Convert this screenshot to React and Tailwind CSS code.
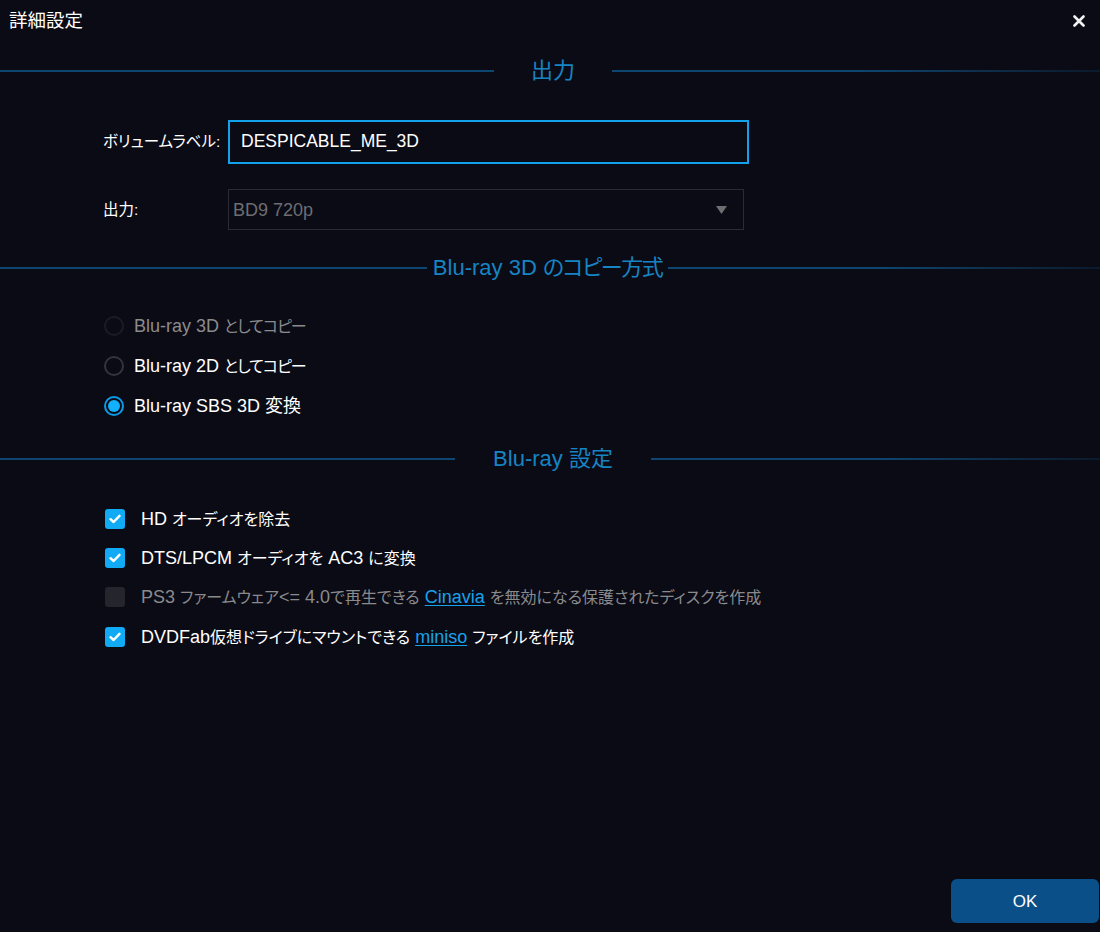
import React from "react";

const FONT = "font-['Liberation_Sans','Noto_Sans_CJK_JP',sans-serif] [font-feature-settings:'palt']";

function J({ children, className = "" }) {
  return <span className={`text-[16px] ${className}`}>{children}</span>;
}

function Header({ left, gap, children }) {
  return (
    <div className="flex items-center h-[24px]">
      <div className="h-[2px] bg-[#0d4670]" style={{ width: left }} />
      <div className="flex justify-center text-[22px] leading-none text-[#1784c4] whitespace-nowrap" style={{ width: gap }}>
        {children}
      </div>
      <div className="h-[2px] flex-1 bg-gradient-to-r from-[#0d4670] via-[#0d4670] to-[#0b1a2c]" />
    </div>
  );
}

function Radio({ state, children }) {
  return (
    <div className="flex items-center h-[40px] pl-[104px] gap-[10px]">
      {state === "on" ? (
        <div className="w-[20px] h-[20px] rounded-full border-2 border-[#0b9be6] flex items-center justify-center">
          <div className="w-[12px] h-[12px] rounded-full bg-[#12b0fd]" />
        </div>
      ) : (
        <div className={`w-[20px] h-[20px] rounded-full border-2 ${state === "disabled" ? "border-[#1c1c25]" : "border-[#34343d]"}`} />
      )}
      <span className={`text-[18px] leading-none whitespace-nowrap ${state === "disabled" ? "text-[#8b8b8e]" : "text-white"}`}>{children}</span>
    </div>
  );
}

function Check({ on, disabled, children }) {
  return (
    <div className="flex items-center h-[39.4px] pl-[105px] gap-[16px]">
      {on ? (
        <div className="w-[20px] h-[20px] rounded-[3px] bg-[#10aaf5] flex items-center justify-center">
          <svg width="12" height="10" viewBox="0 0 12 10">
            <path d="M1.5 5.2 L4.6 8 L10.5 1.8" fill="none" stroke="white" strokeWidth="2.4" strokeLinecap="round" strokeLinejoin="round" />
          </svg>
        </div>
      ) : (
        <div className="w-[20px] h-[20px] rounded-[3px] bg-[#25252e]" />
      )}
      <span className={`text-[18px] leading-none whitespace-nowrap ${disabled ? "text-[#8a8a8d]" : "text-white"}`}>{children}</span>
    </div>
  );
}

export default function App() {
  return (
    <div className={`w-[1100px] h-[932px] bg-[#0b0b15] flex flex-col overflow-hidden ${FONT}`}>
      <div className="flex items-center justify-between h-[42px] pl-[9px] pr-[15px]">
        <span className="text-white text-[18.5px] leading-none">詳細設定</span>
        <svg width="12" height="12" viewBox="0 0 12 12">
          <path d="M1.5 1.5 L10.5 10.5 M10.5 1.5 L1.5 10.5" stroke="#f2f2f2" strokeWidth="2.6" strokeLinecap="round" />
        </svg>
      </div>

      <div className="mt-[17px]">
        <Header left={494} gap={118}>出力</Header>
      </div>

      <div className="mt-[37px] flex items-center pl-[103px]">
        <span className="w-[125px] text-white text-[15.5px] leading-none">ボリュームラベル:</span>
        <div className="w-[521px] h-[44px] border-2 border-[#12a2ec] flex items-center pl-[11px]">
          <span className="text-white text-[17.5px] leading-none">DESPICABLE_ME_3D</span>
        </div>
      </div>

      <div className="mt-[25px] flex items-center pl-[103px]">
        <span className="w-[125px] text-white text-[15.5px] leading-none">出力:</span>
        <div className="w-[516px] h-[41px] border border-[#2b2b35] flex items-center justify-between pl-[4px] pr-[16px]">
          <span className="text-[#6d6d72] text-[18px] leading-none">BD9 720p</span>
          <svg width="11" height="8" viewBox="0 0 11 8">
            <path d="M0 0 H11 L5.5 8 Z" fill="#6d6d72" />
          </svg>
        </div>
      </div>

      <div className="mt-[26px]">
        <Header left={427} gap={241}>
          <span>Blu-ray 3D <span className="tracking-[-1.5px]">のコピー方式</span></span>
        </Header>
      </div>

      <div className="mt-[26px] flex flex-col">
        <Radio state="disabled">Blu-ray 3D <J className="tracking-[-1px]">としてコピー</J></Radio>
        <Radio state="off">Blu-ray 2D <J className="tracking-[-1px]">としてコピー</J></Radio>
        <Radio state="on">Blu-ray SBS 3D 変換</Radio>
      </div>

      <div className="mt-[21px]">
        <Header left={455} gap={196}>Blu-ray 設定</Header>
      </div>

      <div className="mt-[28px] flex flex-col">
        <Check on>HD <J>オーディオを除去</J></Check>
        <Check on>DTS/LPCM <J>オーディオを</J> AC3 <J>に変換</J></Check>
        <Check disabled>
          PS3 <J>ファームウェア</J>&lt;= 4.0<J>で再生できる</J>{" "}
          <span className="text-[#17a2ec] underline underline-offset-2">Cinavia</span>{" "}
          <J>を無効になる保護されたディスクを作成</J>
        </Check>
        <Check on>
          DVDFab<J>仮想ドライブにマウントできる</J>{" "}
          <span className="text-[#17a2ec] underline underline-offset-2">miniso</span>{" "}
          <J>ファイルを作成</J>
        </Check>
      </div>

      <div className="mt-auto flex justify-end pb-[9px] pr-[1px]">
        <button className="w-[148px] h-[44px] rounded-[6px] bg-[#0a4f88] text-white text-[17px] leading-none">OK</button>
      </div>
    </div>
  );
}
